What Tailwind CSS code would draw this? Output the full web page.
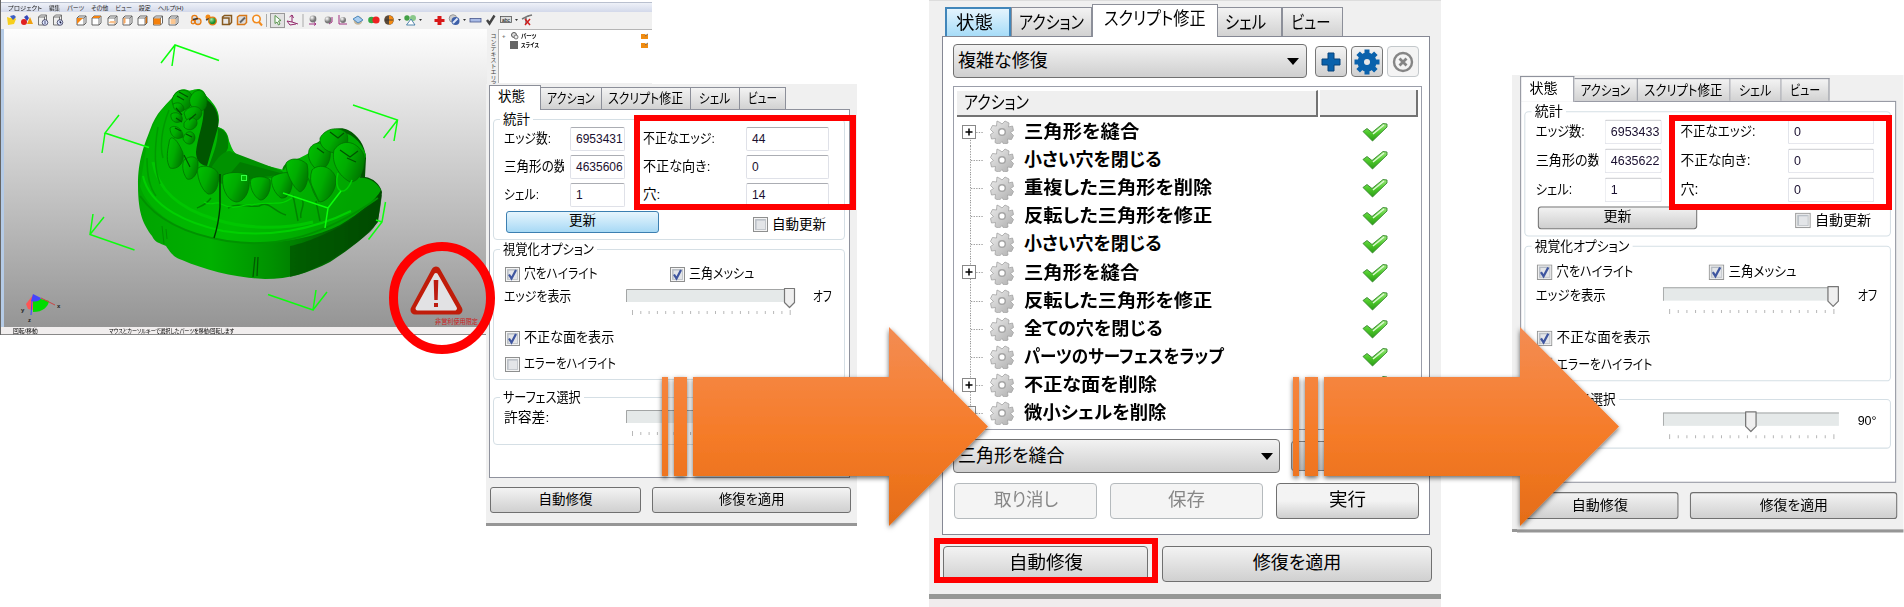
<!DOCTYPE html>
<html lang="ja">
<head>
<meta charset="utf-8">
<title>自動修復の手順</title>
<script src="https://cdn.jsdelivr.net/npm/@tailwindcss/browser@4"></script>
</head>
<body class="bg-white overflow-hidden font-['Liberation_Sans','Noto_Sans_CJK_JP',sans-serif] [font-feature-settings:'palt'] text-black">
<main class="relative w-[1904px] h-[607px] overflow-hidden bg-white">

<!-- 3D viewer window -->
<section class="absolute left-0 top-0 w-[652px] h-[335px] flex flex-col bg-[#f0f0f0]">
  <div class="h-[3px] bg-white border-b border-[#b9c0cf]"></div>
  <nav class="h-[9px] bg-linear-to-b from-[#eef1f8] to-[#d3d9ea] pl-[8px] flex items-center gap-[7px] text-[6px] leading-none text-[#222]">
    <span data-w="34">プロジェクト</span><span data-w="11">編集</span><span data-w="17">パーツ</span><span data-w="17">その他</span><span data-w="16">ビュー</span><span data-w="12">設定</span><span data-w="26">ヘルプ(H)</span>
  </nav>
  <svg class="block shrink-0" width="652" height="17" viewBox="0 12 652 17">
    <defs>
      <g id="cube"><path d="M0 3l2-2h7v7l-2 2H0z" fill="#fff" stroke="#555" stroke-width=".9"/><path d="M0 3h7v7M7 3l2-2" fill="none" stroke="#555" stroke-width=".8"/></g>
      <radialGradient id="ball" cx=".35" cy=".3"><stop offset="0" stop-color="#fff"/><stop offset="1" stop-color="#777"/></radialGradient>
      <radialGradient id="gball" cx=".35" cy=".3"><stop offset="0" stop-color="#a5e8a0"/><stop offset="1" stop-color="#189030"/></radialGradient>
    </defs>
    <rect y="12" width="652" height="17" fill="#f0f0f0"/>
    <path d="M7 17l3 1 4-1 2 2-2 5-6 1z" fill="#f7cf1d"/><path d="M10 16l4-1 2 2-3 3" fill="#3c5fc4"/>
    <circle cx="24" cy="22" r="3" fill="#e02020"/><path d="M24 17l3-2 2 3-2 3z" fill="#3446b8"/><path d="M27 24l3-7 3 7z" fill="#f0a010"/>
    <g fill="#eee" stroke="#666" stroke-width=".9"><path d="M38.500 17l2-2h6v8l-2 2h-6zM38.500 17h6v8M44.500 17l2-2"/><path d="M53.500 17l2-2h6v8l-2 2h-6zM53.500 17h6v8M59.500 17l2-2"/></g>
    <g fill="#dfe8ff" stroke="#335" stroke-width=".8"><circle cx="45" cy="22.500" r="2.800"/><circle cx="60" cy="22.500" r="2.800"/></g><path d="M45 21v3M60 21v2h1.500" stroke="#225" stroke-width=".8"/>
    <use href="#cube" x="77" y="15"/><path d="M77 24v-6h6z" fill="#f58410"/>
    <use href="#cube" x="92" y="15"/><path d="M92 18l2-2h7l-2 2z" fill="#f58410"/>
    <use href="#cube" x="108" y="15"/><path d="M108.500 23l2-2h5v2.500z" fill="#f9c08a"/>
    <use href="#cube" x="123" y="15"/><path d="M123.500 18.500l2-1v5l-2 2z" fill="#f9a860"/>
    <use href="#cube" x="138" y="15"/><path d="M145.500 18l1.500-1.500v6l-1.500 1.500z" fill="#c96b10"/>
    <use href="#cube" x="153.500" y="15"/><path d="M153.500 18.500h7v6h-7z" fill="#f5800a"/>
    <use href="#cube" x="169" y="15"/><path d="M170.500 19h5v5h-5z" fill="#fbc690"/>
    <g stroke="#e77b12" stroke-width="1.300" fill="#dcdcdc"><circle cx="194.500" cy="18" r="2.600"/><circle cx="198" cy="21.500" r="3"/><circle cx="193" cy="22" r="1.800"/></g><path d="M193 19.500l5-1" stroke="#333" stroke-width="1.500"/>
    <circle cx="208" cy="17" r="2.500" fill="#f38a15"/><path d="M206 20l5-2" stroke="#444" stroke-width="1.500"/><circle cx="212.500" cy="21" r="3.800" fill="url(#gball)" stroke="#e77b12" stroke-width="1.300"/>
    <path d="M222.500 17l2-1.500h7v7l-2 2h-7z M223 18h6v6" fill="#e8e8e8" stroke="#86591f" stroke-width="1.500"/>
    <path d="M237.500 17l2-1.500h7v7l-2 2h-7z" fill="#ddd" stroke="#d87818" stroke-width="1.500"/><path d="M240 22.500l5-5" stroke="#666" stroke-width="2"/>
    <circle cx="256.500" cy="19" r="3.700" fill="#f7f7f7" stroke="#f28b1e" stroke-width="1.600"/><path d="M259 22l3 3.500" stroke="#f28b1e" stroke-width="2"/>
    <path d="M266.500 14v13M303 14v13" stroke="#aaa"/>
    <rect x="270.500" y="13.500" width="14" height="14" fill="#e2e2e2" stroke="#999"/><path d="M275 15.500l6 5-2.500.5 1.500 3-1.500 1-1.500-3-2 1.500z" fill="#f8fff8" stroke="#4a8a3c" stroke-width=".9"/>
    <path d="M292 15v7l6 2M292 22l-5-1 3 4 6-1M289.500 17l2.500-2 1.500 3" fill="none" stroke="#93286c" stroke-width="1"/>
    <circle cx="313" cy="19" r="3.400" fill="url(#ball)"/><path d="M309 24h7l-2-1.500M316 24l-2 1.500" stroke="#a03080" fill="none"/>
    <circle cx="328" cy="20" r="3.400" fill="url(#ball)"/><path d="M332 17v5l-3 2" stroke="#a03080" fill="none"/>
    <path d="M339 15v9h8" stroke="#a03080" fill="none"/><circle cx="343" cy="20" r="3" fill="url(#ball)"/>
    <circle cx="358" cy="20.500" r="4.300" fill="#c7b79a"/><path d="M353 19l5-3 5 4-5 3z" fill="#a9cef0" stroke="#357ab8" stroke-width=".8"/>
    <circle cx="371.500" cy="20" r="3.300" fill="#3a4"/><circle cx="376" cy="20" r="3.600" fill="#e22"/>
    <circle cx="389" cy="20" r="4.800" fill="#5a4a3a"/><path d="M389 15.500a4.500 4.500 0 010 9z" fill="#f58b14"/><path d="M385 20h8" stroke="#333" stroke-width=".8"/>
    <path d="M398 19l1.500 2 1.500-2zM419 19l1.500 2 1.500-2zM463 19l1.500 2 1.500-2zM515 19l1.500 2 1.500-2z" fill="#333"/>
    <circle cx="407" cy="18" r="2.700" fill="#43a047"/><circle cx="413" cy="18" r="3" fill="#8ac88a"/><path d="M406.500 25l4.500-6 4 6z" fill="#fff" stroke="#2a6a9a" stroke-width=".8"/>
    <path d="M437.500 16h4v3h3v3h-3v3h-4v-3h-3v-3h3z" fill="#d81818"/>
    <circle cx="453" cy="18.500" r="3.800" fill="#ccc" stroke="#888" stroke-width=".8"/><circle cx="455.500" cy="21" r="4" fill="#3d5fa8"/><path d="M453 23l4.500-4.500" stroke="#dfe8f8" stroke-width="2"/>
    <rect x="470" y="18.500" width="11" height="3.500" fill="#a9bbe6" stroke="#49578c" stroke-width=".8"/>
    <path d="M487 20l2.500 3.500 5-8" fill="none" stroke="#444" stroke-width="2.400"/>
    <rect x="500.500" y="16.500" width="11" height="6" fill="#ddd" stroke="#555" stroke-width=".8"/>
    <text x="502" y="21.500" font-size="5" textLength="8">abc</text>
    <path d="M522 19l6-3 4-1M526 18v6" stroke="#777" stroke-width="1.500"/><path d="M525 19l5 6M530 19l-5 6" stroke="#d02020" stroke-width="1.500"/>
  </svg>
  <div class="flex h-[298px] pl-px">
    <div class="w-[3px] bg-[#b5cbe6] shrink-0"></div>
    <svg class="block shrink-0" width="483" height="298" viewBox="4 29 483 298">
      <defs>
        <linearGradient id="bg" x1="0" y1="0" x2="0" y2="1"><stop offset="0" stop-color="#fdfdfd"/><stop offset="1" stop-color="#959595"/></linearGradient>
        <linearGradient id="base" x1="0" y1="0" x2="1" y2="0"><stop offset="0" stop-color="#00a400"/><stop offset=".3" stop-color="#00b000"/><stop offset=".55" stop-color="#009000"/><stop offset=".8" stop-color="#006400"/><stop offset="1" stop-color="#004800"/></linearGradient>
        <linearGradient id="gum" x1="0" y1="0" x2="1" y2=".3"><stop offset="0" stop-color="#00ae00"/><stop offset=".6" stop-color="#00bb00"/><stop offset="1" stop-color="#00a400"/></linearGradient>
        <linearGradient id="tooth" x1="0" y1="0" x2="1" y2=".5"><stop offset="0" stop-color="#00c200"/><stop offset=".55" stop-color="#00ac00"/><stop offset="1" stop-color="#007c00"/></linearGradient>
        <filter id="soft"><feGaussianBlur stdDeviation=".7"/></filter>
      </defs>
      <rect x="4" y="29" width="483" height="298" fill="url(#bg)"/>
      <g filter="url(#soft)">
        <path d="M138 185C138 160 144 146 150 130C156 112 166 105 172 99C175 90 182 87 190 91C199 87 204 89 206 96C212 102 219 108 219 120L218 127C226 129 229 135 229 144C233 154 243 160 256 164L282 171C283 163 292 157 308 159C308 150 316 142 325 138C329 129 340 126 348 130C358 135 365 145 366 158L365 177C373 178 380 184 382 192L378 222C366 238 345 252 330 262C308 273 290 279 265 279C236 278 205 270 182 260C174 258 170 252 166 246C160 243 155 243 152 236C144 225 138 215 138 185Z" fill="url(#base)"/>
        <path d="M140 186C148 210 172 226 205 236C250 248 305 243 340 225C360 213 376 200 381 190C376 181 366 177 360 178L366 155C358 130 330 124 318 144C306 160 290 158 284 170L240 159C232 154 230 140 224 130L218 127C219 104 203 86 188 91C172 90 152 118 146 150Z" fill="url(#gum)"/>
        <path d="M203 97C214 104 220 112 218 127L207 166C200 165 196 160 196 152C199 130 206 121 203 97Z" fill="#005600"/>
        <path d="M218 128C227 130 229 138 228 148C222 162 214 170 206 174C212 156 218 146 218 128Z" fill="#008000"/>
        <path d="M208 174C216 158 226 148 232 152L282 171L286 176L222 184Z" fill="#009200"/>
        <path d="M222 183L240 162L284 174Z" fill="#007c00"/>
        <path d="M143 176C150 208 190 224 223 231C268 238 313 230 351 211" fill="none" stroke="#00d000" stroke-width="2"/>
        <path d="M140 196C158 222 190 235 227 241C278 249 325 235 378 198" fill="none" stroke="#009200" stroke-width="2"/>
        <path d="M153 162C158 190 178 208 214 219C244 229 281 230 313 222" fill="none" stroke="#00c600" stroke-width="3"/>
        <path d="M158 127C154 150 154 168 160 184M169 110C161 130 160 148 163 158M147 158C147 178 150 188 156 196" fill="none" stroke="#009a00" stroke-width="1.500"/>
        <g fill="url(#tooth)" stroke="#006a00" stroke-width=".7">
          <path d="M172 100C175 88 187 88 192 95C196 101 190 108 184 110C177 110 172 106 172 100Z"/>
          <path d="M191 96C196 87 206 89 207 101C207 108 203 114 195 110C190 106 188 101 191 96Z"/>
          <path d="M173 104C179 101 184 104 184 110C180 114 173 111 173 104Z"/>
          <path d="M184 113C189 104 201 105 202 113C201 121 192 123 186 119Z"/>
          <path d="M171 114C178 110 184 116 182 121C175 125 170 120 171 114Z"/>
          <path d="M184 123C189 115 198 117 197 124C195 131 187 131 184 127Z"/>
          <path d="M170 128C176 123 184 131 183 137C176 141 170 136 170 128Z"/>
          <path d="M183 139C185 129 195 130 195 138C194 146 186 146 183 139Z"/>
          <path d="M169 143C170 132 178 140 183 153C185 164 177 170 170 168C166 161 167 153 169 143Z"/>
          <path d="M184 160C190 155 197 156 198 162C199 174 192 181 187 179C182 172 182 164 184 160Z"/>
          <path d="M198 168C204 164 215 167 218 173C220 188 214 195 208 194C201 190 196 174 198 168Z"/>
          <path d="M223 175C231 171 246 172 249 176C251 192 244 202 236 202C226 200 221 186 223 175Z"/>
          <path d="M251 179C257 175 268 177 270 180C272 192 265 201 260 200C253 196 249 186 251 179Z"/>
          <path d="M272 177C278 173 289 171 292 174C294 190 288 199 281 198C275 194 270 184 272 177Z"/>
          <path d="M286 163C291 157 300 158 307 164C310 178 306 190 300 192C294 189 285 172 286 163Z"/>
          <path d="M309 150C313 141 323 141 330 149C332 162 325 171 317 170C311 165 307 158 309 150Z"/>
          <path d="M320 138C326 127 341 126 347 134C350 145 344 153 335 153C326 152 319 146 320 138Z"/>
          <path d="M334 150C343 137 358 142 364 155C366 168 360 182 350 182C339 176 331 163 334 150Z"/>
          <path d="M312 170C320 162 333 168 336 178C337 190 328 201 320 202C313 195 308 181 312 170Z"/>
        </g>
        <path d="M179 92l9 5M177 96l7 4M176 108l6 7M176 118l6 4M175 128l6 3M196 114l-7 6M192 137l-6-3M330 132l8 6 6-5M317 148l7 5M340 150l10 7 8-6M347 158l9 4M184 155l6 12" stroke="#005200" stroke-width="1.200" fill="none"/>
        <path d="M211 198C206 205 201 206 197 208M228 208C240 202 248 208 259 206C269 200 274 212 286 215M293 195L298 221M302 199C306 206 299 211 301 218M316 201L320 221M308 178L319 202" stroke="#008400" stroke-width="1.500" fill="none"/>
        <path d="M204 202C212 207 218 200 221 204C236 212 246 202 252 205C262 202 268 204 276 203C284 204 288 200 292 198" stroke="#00d400" stroke-width="1.200" fill="none"/>
        <path d="M220 174V207C219 219 217 229 214 238" fill="none" stroke="#003800" stroke-width="1.400"/>
        <path d="M338 173C333 190 344 200 352 180" fill="none" stroke="#00cf00" stroke-width="1.500"/>
        <path d="M382 194C378 201 368 208 352 219C338 229 310 242 290 246L290 277C320 270 350 248 370 232C379 224 380 210 382 194Z" fill="#004b00" opacity=".65"/>
        <path d="M253 277L255 257M257 276L258 257" stroke="#005a00" stroke-width="1.300"/>
        <path d="M162 226l2 18M166 229l1 10" stroke="#008a00"/>
      </g>
      <rect x="241.500" y="175.500" width="5" height="5" fill="#00b800" stroke="#3f4" stroke-width="1"/>
      <g fill="none" stroke="#0cff0c" stroke-width="1.500">
        <path d="M161 63L175 45L219 60.500M175 45L172 66"/>
        <path d="M119 115L105 133L149 147.500M105 133L102 153"/>
        <path d="M93 214L90 234.500L134.500 250M90 234.500L104 217"/>
        <path d="M268 294.500L313 310L316 290M313 310L327 292"/>
        <path d="M353 105L397.500 120L394 141M397.500 120L383.500 138"/>
        <path d="M283 193L328 208L325 228M328 208L341 191"/>
        <path d="M385.500 202L382 222L368.500 239.500M382 222L376 220"/>
      </g>
      <path d="M33 295l-7 9 2 5 5 1z" fill="#f55"/><path d="M33 297l16 4c-1 6-6 11-16 11z" fill="#00dc00"/><path d="M33 294l8 4c-2 4-6 4-10 3z" fill="#44f"/>
      <path d="M41 298l14 7" stroke="#c44"/><path d="M32 301l-1 14" stroke="#44f"/>
      <g fill="#222" font-size="6" font-weight="bold"><text x="57" y="308">x</text><text x="21" y="312">y</text><text x="28" y="322">z</text></g>
      <path d="M436 271L458 310H415Z" fill="#c01808" stroke="#c01c0a" stroke-width="9" stroke-linejoin="round"/>
      <path d="M436 275L455 308.500H417.500Z" fill="#e2e2e4" stroke="#e2e2e4" stroke-width="4" stroke-linejoin="round"/>
      <path d="M433.700 280h4.600l-.6 20h-3.400zM434 303h4v4h-4z" fill="#bd1c10"/>
      <text x="435" y="324" font-size="7" fill="#cc1c1c" textLength="43" lengthAdjust="spacingAndGlyphs">非営利使用限定</text>
    </svg>
    <div class="w-[11px] shrink-0 bg-[#f0f0f0] pt-[4px] text-[6px] leading-[11px] text-[#444] [writing-mode:vertical-rl] whitespace-nowrap">コンテキストエリア</div>
    <div class="h-[54px] grow bg-white border-l border-t border-[#b5b5b5] pt-[2px] pl-[3px] pr-[3px] text-[6px] leading-[8px] font-bold">
      <div class="flex items-center h-[8px]"><span class="text-[#777] w-[8px]">+</span><svg width="9" height="8"><circle cx="4" cy="3" r="2.500" fill="#ddd" stroke="#555"/><circle cx="6" cy="5" r="2" fill="#eee" stroke="#777"/></svg><span class="ml-[2px]" data-w="15">パーツ</span><svg class="ml-auto" width="8" height="8"><path d="M0 2h4l1 1h2v4H0z" fill="#f08c10"/><path d="M4 4l3-2" stroke="#864"/></svg></div>
      <div class="flex items-center h-[9px]"><span class="w-[8px]"></span><svg width="8" height="8"><path d="M0 0h8v8H0z" fill="#666"/></svg><span class="ml-[3px]" data-w="18">スライス</span><svg class="ml-auto" width="8" height="8"><path d="M0 2h4l1 1h2v4H0z" fill="#f08c10"/><path d="M4 4l3-2" stroke="#864"/></svg></div>
    </div>
  </div>
  <footer class="h-[8px] bg-[#f1eeee] border-b border-[#888] flex items-center text-[6px] leading-none pl-[13px] gap-[71px]"><span data-w="25">回転/移動</span><span data-w="125">マウスとカーソルキーで選択したパーツを移動/回転します</span></footer>
</section>
<div class="absolute left-0 top-0 w-px h-[335px] bg-[#666]"></div>
<!-- blank canvas right of the viewer, below its tree -->
<div class="absolute left-[500px] top-[327px] w-[152px] h-[8px] bg-white"></div>

<!-- Status panels before and after the repair -->
<div class="absolute left-[486px] top-[84px]" id="before"></div>
<div class="absolute left-[1512px] top-[75px] w-[6px] h-[457px] bg-[#f0f0f0] border-b-3 border-[#969696]"></div>
<div class="absolute left-[1517px] top-[75px] origin-top-left scale-x-[1.0417] scale-y-[1.035]" id="after"></div>

<!-- Script repair panel -->
<section class="absolute left-[929px] top-0 w-[512px] h-[607px] bg-[#f0f0f0] flex flex-col text-[18px] leading-none">
  <div class="h-[36px] pl-[16px] flex items-end border-t border-[#ddd] shrink-0">
    <div class="w-[66px] h-[29px] border-2 border-b-0 border-[#4186ba] bg-linear-to-b from-[#e4f4fd] to-[#a6dcf8] flex items-center justify-center pr-[8px]"><span data-w="37">状態</span></div>
    <div class="w-[81px] h-[29px] border border-b-0 border-[#8c8f99] bg-linear-to-b from-[#f3f3f3] to-[#d2d2d2] flex items-center justify-center pt-[2px]"><span data-w="65">アクション</span></div>
    <div class="relative z-10 w-[126px] h-[33px] -mb-px border border-b-0 border-[#8c8f99] bg-white flex items-center pb-[4px] pl-[11px]"><span data-w="102">スクリプト修正</span></div>
    <div class="w-[64px] h-[29px] border border-l-0 border-b-0 border-[#8c8f99] bg-linear-to-b from-[#f3f3f3] to-[#d2d2d2] flex items-center pl-[7px] pt-[2px]"><span data-w="41">シェル</span></div>
    <div class="w-[61px] h-[29px] border border-b-0 border-[#8c8f99] bg-linear-to-b from-[#f3f3f3] to-[#d2d2d2] flex items-center pl-[8px] pt-[2px]"><span data-w="39">ビュー</span></div>
  </div>
  <div class="ml-[13px] w-[488px] h-[499px] border border-[#858894] bg-white px-[10px] pt-[7px] shrink-0">
    <div class="flex items-start">
      <div class="w-[355px] h-[34px] rounded-[4px] border border-[#707070] bg-linear-to-b from-[#f2f2f2] to-[#cfcfcf] flex items-center pl-[4px] pr-[7px]"><span data-w="90">複雑な修復</span><svg class="ml-auto" width="12" height="7"><path d="M0 0h12L6 7z"/></svg></div>
      <div class="mt-[2px] ml-[8px] w-[32px] h-[31px] rounded-[4px] border border-[#777] bg-linear-to-b from-[#f4f4f4] to-[#d0d0d0] flex items-center justify-center"><svg width="20" height="20"><path d="M7 1h6v6h6v6h-6v6H7v-6H1V7h6z" fill="#0a62ac" stroke="#06437a"/></svg></div>
      <div class="mt-[2px] ml-[4px] w-[32px] h-[31px] rounded-[4px] border border-[#777] bg-linear-to-b from-[#f4f4f4] to-[#d0d0d0] flex items-center justify-center"><svg width="26" height="26" viewBox="-13 -13 26 26" fill="#0a62ac"><circle r="9.500"/><path id="teeth" d="M-2.500-12.500h5v25h-5zM-12.500-2.500v5h25v-5z"/><use href="#teeth" transform="rotate(45)"/><circle r="3" fill="#e8e8e8"/></svg></div>
      <div class="mt-[2px] ml-[4px] w-[32px] h-[31px] rounded-[4px] border border-[#c3c8cb] bg-[#f4f4f4] flex items-center justify-center"><svg width="22" height="22" fill="none" stroke="#858585"><circle cx="11" cy="11" r="9" stroke-width="2.400"/><path d="M7.500 7.500l7 7m0-7l-7 7" stroke-width="2.800"/></svg></div>
    </div>
    <div class="mt-[8px] w-[469px] h-[344px] border border-[#9b9eaa] bg-white pt-[3px] px-[3px]">
      <div class="flex h-[27px] gap-[2px]">
        <div class="w-[362px] bg-[#efefef] border-b-2 border-r-2 border-[#737373] border-t border-t-white flex items-center pl-[7px]"><span data-w="65">アクション</span></div>
        <div class="w-[98px] bg-[#efefef] border-b-2 border-r-2 border-[#737373]"></div>
      </div>
      <div id="actions" class="pt-px"></div>
    </div>
    <div class="mt-[9px] flex items-center">
      <div class="w-[328px] h-[34px] rounded-[4px] border border-[#707070] bg-linear-to-b from-[#f2f2f2] to-[#cfcfcf] flex items-center pl-[4px] pr-[6px]"><span data-w="107">三角形を縫合</span><svg class="ml-auto" width="12" height="7"><path d="M0 0h12L6 7z"/></svg></div>
      <div class="ml-[11px] w-[129px] h-[30px] rounded-[3px] border border-[#8a8a8a] bg-linear-to-b from-[#f2f2f2] to-[#cfcfcf]"></div>
    </div>
    <div class="mt-[10px] flex text-[#878787] pb-px">
      <div class="ml-px w-[144px] h-[36px] rounded-[4px] border border-[#b5babd] bg-[#f4f4f4] flex items-center justify-center pb-[2px]"><span data-w="64">取り消し</span></div>
      <div class="ml-[13px] w-[153px] h-[36px] rounded-[4px] border border-[#b5babd] bg-[#f4f4f4] flex items-center justify-center pb-[2px]"><span data-w="37">保存</span></div>
      <div class="ml-[13px] w-[144px] h-[36px] rounded-[4px] border border-[#707070] bg-linear-to-b from-[#f3f3f3] from-50% to-[#cfcfcf] flex items-center justify-center pb-[2px] text-black"><span data-w="37">実行</span></div>
    </div>
  </div>
  <div class="mt-[11px] ml-[14px] flex gap-[14px] shrink-0">
    <div class="w-[205px] h-[36px] rounded-[4px] border border-[#707070] bg-linear-to-b from-[#f3f3f3] to-[#d0d0d0] flex items-center justify-center pb-[2px]"><span data-w="74">自動修復</span></div>
    <div class="w-[270px] h-[36px] rounded-[4px] border border-[#707070] bg-linear-to-b from-[#f3f3f3] to-[#d0d0d0] flex items-center justify-center pb-[2px]"><span data-w="89">修復を適用</span></div>
  </div>
  <div class="mt-[12px] h-[5px] bg-[#969896] shrink-0"></div>
  <div class="grow bg-[#f0eced]"></div>
</section>

<!-- Callouts and arrows laid over the windows -->
<svg class="absolute left-0 top-0" width="1904" height="607">
  <defs>
    <linearGradient id="or" gradientUnits="userSpaceOnUse" x1="0" y1="327" x2="0" y2="526"><stop offset="0" stop-color="#f38c54"/><stop offset=".25" stop-color="#f5853f"/><stop offset=".55" stop-color="#f57b28"/><stop offset=".8" stop-color="#ec731d"/><stop offset="1" stop-color="#e46c18"/></linearGradient>
    <filter id="sh" x="-5%" y="-5%" width="115%" height="115%"><feDropShadow dx="0" dy="2" stdDeviation="2.500" flood-color="#000" flood-opacity=".6"/></filter>
    <path id="arrow" d="M662 377h6v99h-6zM674 377h13v99h-13zM693 377H889V327L988 426.500L889 526V476H693Z"/>
  </defs>
  <ellipse cx="442" cy="298" rx="48.500" ry="51.500" fill="none" stroke="#f00" stroke-width="9"/>
  <g fill="none" stroke="#f00" stroke-width="6">
    <rect x="637" y="118" width="216" height="89"/>
    <rect x="1672" y="118" width="217" height="89"/>
    <rect x="937" y="541" width="218" height="39"/>
  </g>
  <g fill="url(#or)" filter="url(#sh)"><use href="#arrow"/></g>
  <g fill="url(#or)" filter="url(#sh)"><use href="#arrow" x="631"/></g>
</svg>
</main>

<script>
const check = on => `<svg class="shrink-0" width="15" height="15"><rect x=".5" y=".5" width="14" height="14" fill="#f4f4f4" stroke="#8e8f8f"/><rect x="2.500" y="2.500" width="10" height="10" fill="#e3e5e8" stroke="#c3c7cc"/><path d="M3 12V3h9" fill="none" stroke="#b4bac2"/>${on ? '<path d="M4 7.500l2.500 4 4.500-8.500" fill="none" stroke="#3f56a0" stroke-width="2.200"/>' : ''}</svg>`;
const slider = x => {
  let ticks = '';
  for (let i = 0; i < 20; i++) ticks += `<path d="M${6.5 + i * 8.3} ${i % 19 ? 24 : 23}v${i % 19 ? 3 : 5}" stroke="#b8b8b8"/>`;
  return `<svg class="block shrink-0" width="170" height="28"><rect x="0" y="2" width="169" height="13" fill="#e5e9e9"/><path d="M.5 15V2.500H169" fill="none" stroke="#a3a5a5"/>${ticks}<path d="M${x + .5} 1.500h10v14l-5 5-5-5z" fill="#efefef" stroke="#777" stroke-linejoin="round" stroke-width="1.200"/></svg>`;
};
const tab = (w, t, tw) => `<div class="h-[22px] border border-l-0 border-b-0 border-[#8c8f99] bg-linear-to-b from-[#f3f3f3] to-[#d2d2d2] flex items-center justify-center" style="width:${w}px"><span data-w="${tw}">${t}</span></div>`;
const legend = (t, w) => `<div class="ml-[6px] -mt-[8px] h-[15px] w-fit px-[3px] bg-white leading-[15px]"><span data-w="${w}">${t}</span></div>`;
const field = v => `<div class="h-[24px] border border-[#dfe1e8] border-t-[#abadb3] rounded-[2px] bg-white pl-[5px] overflow-hidden text-[12px] leading-[23px] text-[#1a1030]">${v}</div>`;
const row = (a, aw, v, b, bw, u) => `<div class="grid grid-cols-[66px_55px_18px_103px_83px] pl-[10px] mb-[4px] leading-[24px]"><div class="overflow-hidden whitespace-nowrap w-[60px]"><span data-w="${aw}">${a}</span></div>${field(v)}<i></i><div><span data-w="${bw}">${b}</span></div>${field(u)}</div>`;
const panel = d => `
<section class="w-[371px] h-[442px] bg-[#f0f0f0] flex flex-col text-[13.5px] leading-none">
  <div class="pl-[3px] flex items-end h-[25px] shrink-0">
    <div class="relative z-10 w-[52px] h-[25px] -mb-px bg-white border border-b-0 border-[#8c8f99] flex items-center pl-[8px] pb-[2px]"><span data-w="27">状態</span></div>
    ${tab(61, 'アクション', 48)}${tab(89, 'スクリプト修正', 75)}${tab(49, 'シェル', 31)}${tab(46, 'ビュー', 29)}
  </div>
  <div class="ml-[3px] w-[361px] h-[369px] bg-white border border-[#8f929d] pt-[9px] pl-[3px] shrink-0">
    <div class="w-[352px] h-[121px] border border-[#d5dfe5] rounded-[4px]">
      ${legend('統計', 27)}
      ${row('エッジ数:', 47, d.v[0], '不正なエッジ:', 72, d.v[3])}
      ${row('三角形の数:', 66, d.v[1], '不正な向き:', 67, d.v[4])}
      ${row('シェル:', 35, d.v[2], '穴:', 17, d.v[5])}
      <div class="flex items-start pl-[12px] mt-[1px]">
        <div class="w-[153px] h-[22px] rounded-[3px] flex justify-center items-center pb-[2px] border ${d.hot ? 'border-[#3c7fb1] bg-linear-to-b from-[#e6f5fd] to-[#a7d9f5]' : 'border-[#707070] bg-linear-to-b from-[#f2f2f2] to-[#cfcfcf]'}"><span data-w="27">更新</span></div>
        <div class="flex items-center ml-[94px] mt-[6px] gap-[4px]">${check(0)}<span data-w="54">自動更新</span></div>
      </div>
    </div>
    <div class="mt-[9px] w-[352px] h-[131px] border border-[#d5dfe5] rounded-[4px]">
      ${legend('視覚化オプション', 91)}
      <div class="mt-[9px] pl-[11px] h-[16px] flex items-center">${check(1)}<span class="ml-[4px]"><span data-w="74">穴をハイライト</span></span><span class="ml-[72px] flex items-center gap-[4px]">${check(1)}<span data-w="65">三角メッシュ</span></span></div>
      <div class="mt-[5px] pl-[10px] grid grid-cols-[122px_187px_30px] leading-[20px]"><div><span data-w="67">エッジを表示</span></div>${slider(158)}<div><span data-w="19">オフ</span></div></div>
      <div class="mt-[15px] pl-[11px] h-[16px] flex items-center gap-[4px]">${check(1)}<span data-w="90">不正な面を表示</span></div>
      <div class="mt-[10px] pl-[11px] h-[16px] flex items-center gap-[4px]">${check(0)}<span data-w="92">エラーをハイライト</span></div>
    </div>
    <div class="mt-[17px] w-[352px] h-[48px] border border-[#d5dfe5] rounded-[4px]">
      ${legend('サーフェス選択', 78)}
      <div class="mt-[3px] pl-[10px] grid grid-cols-[122px_187px_30px] leading-[20px]"><div><span data-w="45">許容差:</span></div>${slider(79)}<div class="text-[12px]">90°</div></div>
    </div>
  </div>
  <div class="mt-[9px] pl-[4px] flex gap-[11px] shrink-0">
    <div class="w-[151px] h-[26px] rounded-[3px] border border-[#707070] bg-linear-to-b from-[#f3f3f3] to-[#d0d0d0] flex items-center justify-center pb-px"><span data-w="54">自動修復</span></div>
    <div class="w-[199px] h-[26px] rounded-[3px] border border-[#707070] bg-linear-to-b from-[#f3f3f3] to-[#d0d0d0] flex items-center justify-center pb-px"><span data-w="65">修復を適用</span></div>
  </div>
  <div class="mt-auto h-[3px] bg-[#969696]"></div>
</section>`;
document.getElementById('before').innerHTML = panel({hot: true, v: ['6953431', '4635606', '1', '44', '0', '14']});
document.getElementById('after').innerHTML = panel({hot: false, v: ['6953433', '4635622', '1', '0', '0', '0']});

const gear = `<svg class="shrink-0" width="24" height="24" viewBox="-12 -12 24 24"><defs><linearGradient id="gg" x1="0" y1="0" x2="1" y2="1"><stop offset="0" stop-color="#ececec"/><stop offset="1" stop-color="#adadad"/></linearGradient></defs><path d="M-5-11l3 1.500L0-8l3-3 4 2-.5 4 4-1 1 4.500-3 2 3 3-2 4-4-.5.5 4-4 1.500-2-3-3 3-4-2 .5-4-4 .5-1-4.500 3-2-3-3 2-4 4 .5z" fill="url(#gg)" stroke="#a2a2a2" stroke-width=".8" stroke-linejoin="round"/><circle r="3.300" fill="#fff" stroke="#a5a5a5" stroke-width="1.500"/></svg>`;
const tick = `<svg class="shrink-0" width="26" height="20" viewBox="0 0 26 20"><defs><linearGradient id="gt" x1="0" y1="0" x2="0" y2="1"><stop offset="0" stop-color="#9be67c"/><stop offset=".5" stop-color="#4fcb2c"/><stop offset="1" stop-color="#2b9c16"/></linearGradient></defs><path d="M1 9.500L5 6.500L10 10.500L21 1.500L25 2V5L10.500 19Z" fill="url(#gt)" stroke="#36882c" stroke-width=".9" stroke-linejoin="round"/><path d="M11 12l11-9" stroke="#dff8d6" stroke-width="1.500"/></svg>`;
const acts = [['三角形を縫合', 115, 1], ['小さい穴を閉じる', 138], ['重複した三角形を削除', 188], ['反転した三角形を修正', 188], ['小さい穴を閉じる', 138], ['三角形を縫合', 115, 1], ['反転した三角形を修正', 188], ['全ての穴を閉じる', 139], ['パーツのサーフェスをラップ', 200], ['不正な面を削除', 133, 1], ['微小シェルを削除', 142, 1]];
document.getElementById('actions').innerHTML = acts.map(([t, w, p], i) => `
<div class="h-[28.1px] flex items-center pl-[4px] font-bold">
  <svg class="shrink-0 mr-[7px]" width="22" height="28.100"><path d="M9.500 ${i ? 0 : 14}V${i == 10 ? 14 : 29}M10 14.500h13" stroke="#999" stroke-dasharray="1.300 1.300" fill="none"/>${p ? '<rect x="1.500" y="7.500" width="13" height="13" fill="#fff" stroke="#888"/><path d="M4.500 14h7M8 10.500v7" stroke="#000" stroke-width="1.500"/>' : ''}</svg>
  ${gear}<span class="ml-[10px]"><span data-w="${w}">${t}</span></span><span class="ml-auto mr-[30px]">${i < 10 ? tick : ''}</span>
</div>`).join('');

// Condense each label to the width of the narrow UI font, again whenever its natural width changes.
const fit = e => {
  const n = e.offsetWidth, w = +e.dataset.w;
  if (!n) return;
  e.style.transform = `scaleX(${w / n})`;
  e.style.marginRight = `${w - n}px`;
};
const watcher = new ResizeObserver(list => list.forEach(r => fit(r.target)));
document.querySelectorAll('[data-w]').forEach(e => {
  e.style.display = 'inline-block';
  e.style.whiteSpace = 'nowrap';
  e.style.flexShrink = 0;
  e.style.transformOrigin = 'left';
  fit(e);
  watcher.observe(e);
});
window.addEventListener('load', () => document.querySelectorAll('[data-w]').forEach(fit));
</script>
</body>
</html>
